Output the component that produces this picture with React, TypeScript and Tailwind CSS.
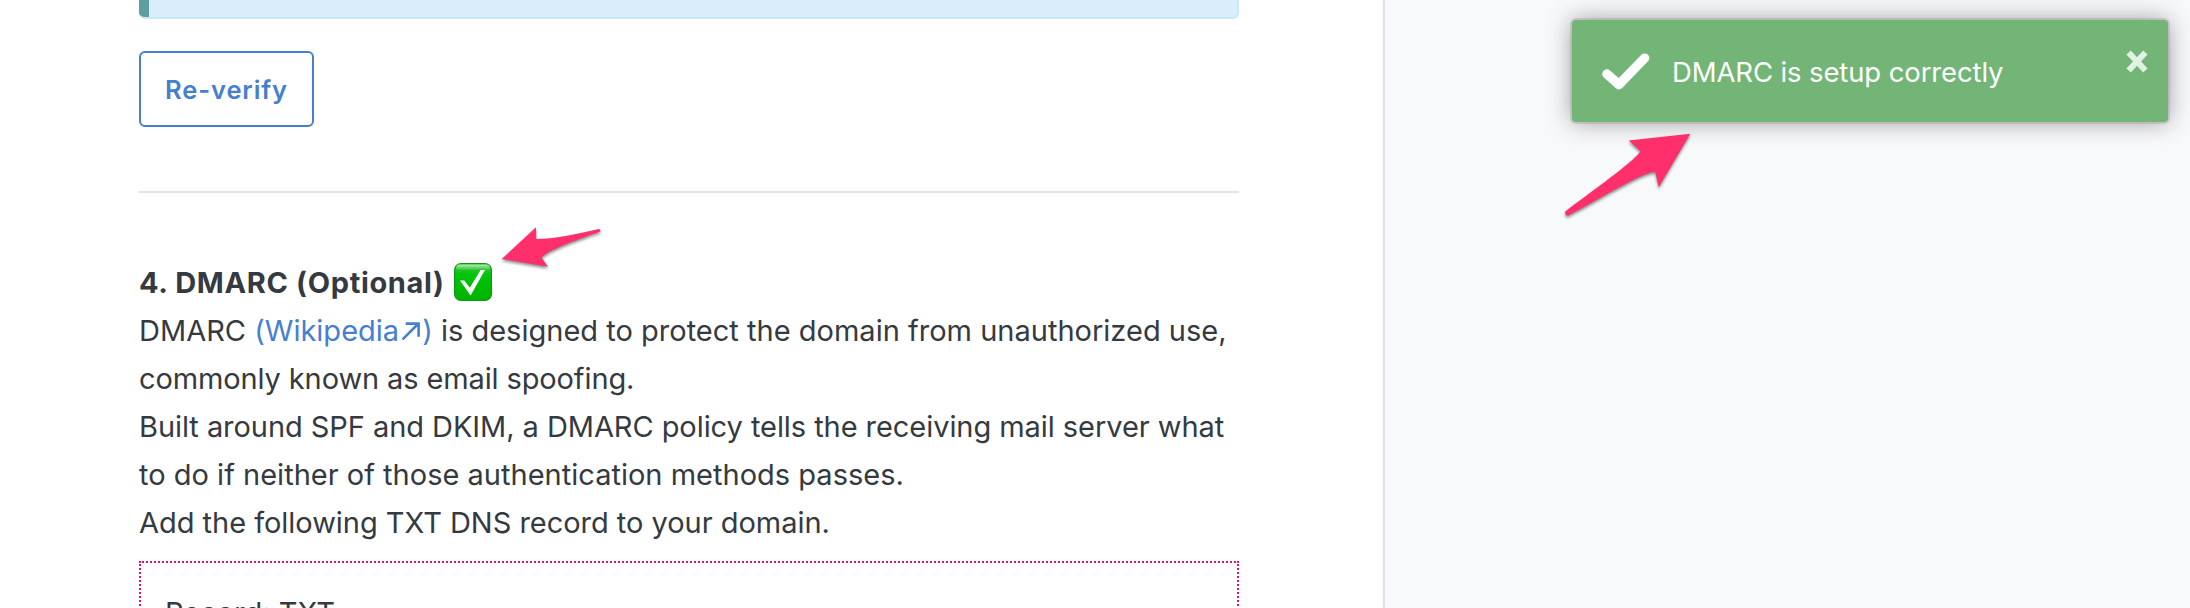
import React from "react";

function NorthEastArrow() {
  return (
    <svg className="ml-[2px] mr-px inline-block h-[20px] w-[20px] align-[0px]" viewBox="0 0 20 20" fill="none" stroke="currentColor" strokeWidth="2.6">
      <path d="M1.6 18.4 17 3M4.7 2.6h12.9v13.2" />
    </svg>
  );
}

function CheckBadge() {
  return (
    <svg className="mt-[5px] h-[38px] w-[38px]" viewBox="0 0 38 38">
      <defs>
        <linearGradient id="badge" x1="0" y1="0" x2="0" y2="1">
          <stop offset="0" stopColor="#3fc840" />
          <stop offset="0.18" stopColor="#1fc322" />
          <stop offset="0.3" stopColor="#00c40a" />
          <stop offset="1" stopColor="#00b400" />
        </linearGradient>
        <linearGradient id="gloss" x1="0" y1="0" x2="0" y2="1">
          <stop offset="0" stopColor="#fff" stopOpacity="0.6" />
          <stop offset="1" stopColor="#fff" stopOpacity="0" />
        </linearGradient>
      </defs>
      <rect x="0.6" y="0.6" width="36.8" height="36.8" rx="6.5" fill="url(#badge)" stroke="#0d9a14" strokeWidth="1.2" />
      <rect x="2.2" y="1.6" width="33.6" height="6" rx="3" fill="url(#gloss)" />
      <path d="M6 17.6 10.3 17.6 15.8 24.8 26.6 7 31 7 16.6 32.4Z" fill="#fff" />
    </svg>
  );
}

function LeftArrow() {
  return (
    <svg className="absolute left-[496px] top-[220px] h-[56px] w-[112px] overflow-visible drop-shadow-[0_2px_1.5px_rgba(0,0,0,0.45)]" viewBox="0 0 112 56">
      <path d="M5.8 38.9 40 7.2 40.2 19C58 18.8 80 14.4 102.5 8.9Q104.8 8.9 104.4 11.6C84 18.9 54 29 45.5 37.6L52 46.8Z" fill="#ff2f6c" />
    </svg>
  );
}

function RightArrow() {
  return (
    <svg className="absolute left-[1560px] top-[130px] h-[90px] w-[135px] overflow-visible drop-shadow-[0_2px_1.5px_rgba(0,0,0,0.45)]" viewBox="0 0 135 90">
      <path d="M130.3 3.8 98.7 57.3 95.3 42C84 41 40 69 8.2 85.4Q4.5 85.8 5.3 81.4C31 62 74 31.5 80.5 21.3L68.8 10.6Z" fill="#ff2f6c" />
    </svg>
  );
}

function Toast() {
  return (
    <div className="absolute left-[1572px] top-[20px] flex h-[102px] w-[596px] rounded-[4px] bg-[#73b576] text-white shadow-[0_0_24px_#999,0_0_0_2px_rgba(120,120,120,0.25)]">
      <svg className="ml-[29px] mt-[31px] h-[40px] w-[50px]" viewBox="0 0 50 40" fill="none" stroke="#fff" strokeWidth="9.4" strokeLinecap="round" strokeLinejoin="round">
        <path d="M5.9 23 18 33.6 43.7 7.1" />
      </svg>
      <p className="ml-[21px] mt-[30px] h-[44px] whitespace-nowrap text-[27.5px] leading-[44px] tracking-[-0.12px]">DMARC is setup correctly</p>
      <svg className="ml-auto mr-[20px] mt-[30px] h-[23px] w-[22px]" viewBox="0 0 22 23" fill="none" stroke="#e3f0e4" strokeWidth="6">
        <path d="M2.6 2.5 19.4 20.5M19.4 2.5 2.6 20.5" />
      </svg>
    </div>
  );
}

export default function App() {
  return (
    <div className="relative flex h-[608px] overflow-hidden bg-[#f8f9fb] font-['Inter',sans-serif] text-[29px] leading-[48px] text-[#343a40]">
      <main className="flex w-[1385px] shrink-0 flex-col border-r-2 border-[#dee2e8] bg-white pl-[139px] pr-[144px]">
        <div className="relative h-[19px] shrink-0 overflow-hidden rounded-b-[6px] border-b-2 border-r-2 border-[#cbe8f9] bg-[#daedfb]">
          <div className="-mb-[2px] h-[18px] w-[10px] bg-[#5f9ea0]" />
        </div>
        <button className="mt-[32px] h-[76px] w-[175px] shrink-0 rounded-[6px] border-2 border-[#467fcf] pt-[2px] text-[25.5px] font-semibold tracking-[0.9px] text-[#467fcf]">
          Re-verify
        </button>
        <hr className="mt-[64px] border-t-2 border-[#e0e3ea]" />
        <h2 className="mt-[65px] flex h-[48px] shrink-0 whitespace-nowrap font-bold">
          <span className="mr-[9px] pt-px tracking-[0.65px]">4. DMARC (Optional)</span>
          <CheckBadge />
        </h2>
        <div className="h-[240px] shrink-0 whitespace-nowrap pt-px tracking-[-0.05px]">
          <p className="tracking-[0.01px]">
            DMARC{" "}
            <a className="text-[#467fcf]">(Wikipedia<NorthEastArrow />)</a>
            {" "}is designed to protect the domain from unauthorized use,
          </p>
          <p className="tracking-[-0.12px]">commonly known as email spoofing.</p>
          <p className="tracking-[-0.06px]">Built around SPF and DKIM, a DMARC policy tells the receiving mail server what</p>
          <p className="tracking-[0.01px]">to do if neither of those authentication methods passes.</p>
          <p className="tracking-[-0.03px]">Add the following TXT DNS record to your domain.</p>
        </div>
        <div className="mt-[15px] h-[120px] shrink-0 border-2 border-dotted border-[#d6156c] px-[24px] pt-[26px]">
          Record: TXT
        </div>
      </main>
      <LeftArrow />
      <Toast />
      <RightArrow />
    </div>
  );
}
